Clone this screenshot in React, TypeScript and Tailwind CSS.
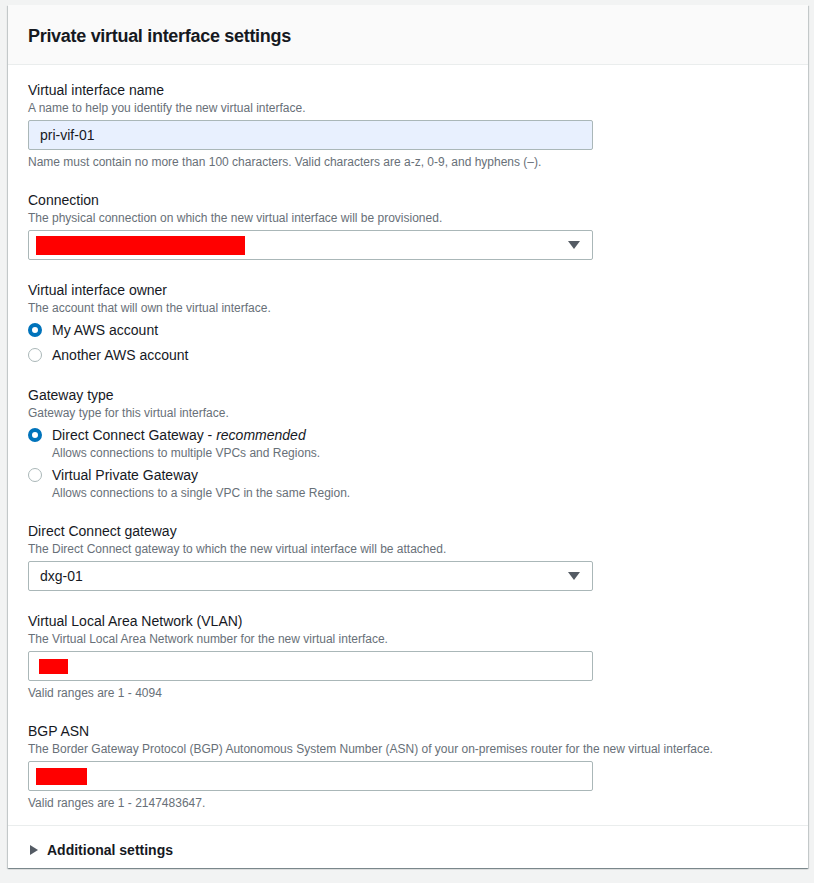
import React from "react";

const font = { fontFamily: '"Liberation Sans", Arial, sans-serif' };

function Label({ title, desc }: { title: string; desc: string }) {
  return (
    <div>
      <div className="text-[14px] leading-[20px] text-[#16191f]">{title}</div>
      <div className="text-[12px] leading-[16px] text-[#687078]">{desc}</div>
    </div>
  );
}

function Hint({ children }: { children: React.ReactNode }) {
  return <div className="mt-1 text-[12px] leading-[16px] text-[#687078]">{children}</div>;
}

function Redact({ w, h }: { w: number; h: number }) {
  return <div className="bg-[#ff0000]" style={{ width: w, height: h }} />;
}

function Select({ children }: { children: React.ReactNode }) {
  return (
    <div className="mt-1 flex h-[30px] w-[565px] items-center justify-between rounded-[2px] border border-[#aab7b8] bg-white pl-[7px] pr-[12px]">
      {children}
      <svg width="12" height="8" viewBox="0 0 12 8">
        <path d="M0 0h12L6 8z" fill="#545b64" />
      </svg>
    </div>
  );
}

function Input({ children, filled }: { children: React.ReactNode; filled?: boolean }) {
  return (
    <div
      className={
        "mt-1 flex h-[30px] w-[565px] items-center rounded-[2px] border border-[#aab7b8] pl-[7px] " +
        (filled ? "bg-[#e8f0fe]" : "bg-white")
      }
    >
      {children}
    </div>
  );
}

function Radio({
  checked,
  label,
  desc,
}: {
  checked?: boolean;
  label: React.ReactNode;
  desc?: string;
}) {
  return (
    <div className="flex gap-[10px]">
      <div className="flex h-[20px] items-center">
        {checked ? (
          <div className="h-[14px] w-[14px] rounded-full border-[4px] border-[#0073bb] bg-white" />
        ) : (
          <div className="h-[14px] w-[14px] rounded-full border border-[#aab7b8] bg-white" />
        )}
      </div>
      <div>
        <div className="text-[14px] leading-[20px] text-[#16191f]">{label}</div>
        {desc && <div className="text-[12px] leading-[16px] text-[#687078]">{desc}</div>}
      </div>
    </div>
  );
}

export default function App() {
  return (
    <div className="min-h-[883px] bg-[#f2f3f3] px-[8px] pt-[5px]" style={font}>
      <div className="w-[800px] bg-white shadow-[0_1px_1px_0_rgba(0,28,36,0.3),1px_1px_1px_0_rgba(0,28,36,0.15),-1px_1px_1px_0_rgba(0,28,36,0.15)]">
        <div className="flex h-[60px] items-center border-b border-[#eaeded] bg-[#fafafa] px-[20px] pt-[3px]">
          <h2 className="text-[18px] font-bold leading-[22px] tracking-[-0.3px] text-[#16191f]">
            Private virtual interface settings
          </h2>
        </div>

        <div className="flex flex-col gap-[20px] px-[20px] pb-[14px] pt-[15px]">
          <div>
            <Label
              title="Virtual interface name"
              desc="A name to help you identify the new virtual interface."
            />
            <Input filled>
              <span className="pl-[4px] text-[14px] text-[#16191f]">pri-vif-01</span>
            </Input>
            <Hint>
              Name must contain no more than 100 characters. Valid characters are a-z, 0-9, and
              hyphens (–).
            </Hint>
          </div>

          <div>
            <Label
              title="Connection"
              desc="The physical connection on which the new virtual interface will be provisioned."
            />
            <Select>
              <Redact w={209} h={19} />
            </Select>
          </div>

          <div>
            <Label
              title="Virtual interface owner"
              desc="The account that will own the virtual interface."
            />
            <div className="mt-1 flex flex-col gap-[5px]">
              <Radio checked label="My AWS account" />
              <Radio label="Another AWS account" />
            </div>
          </div>

          <div>
            <Label title="Gateway type" desc="Gateway type for this virtual interface." />
            <div className="mt-1 flex flex-col gap-[4px]">
              <Radio
                checked
                label={
                  <>
                    Direct Connect Gateway - <i>recommended</i>
                  </>
                }
                desc="Allows connections to multiple VPCs and Regions."
              />
              <Radio
                label="Virtual Private Gateway"
                desc="Allows connections to a single VPC in the same Region."
              />
            </div>
          </div>

          <div>
            <Label
              title="Direct Connect gateway"
              desc="The Direct Connect gateway to which the new virtual interface will be attached."
            />
            <Select>
              <span className="pl-[4px] text-[14px] text-[#16191f]">dxg-01</span>
            </Select>
          </div>

          <div>
            <Label
              title="Virtual Local Area Network (VLAN)"
              desc="The Virtual Local Area Network number for the new virtual interface."
            />
            <Input>
              <div className="pl-[3px]">
                <Redact w={29} h={15} />
              </div>
            </Input>
            <Hint>Valid ranges are 1 - 4094</Hint>
          </div>

          <div>
            <Label
              title="BGP ASN"
              desc="The Border Gateway Protocol (BGP) Autonomous System Number (ASN) of your on-premises router for the new virtual interface."
            />
            <Input>
              <Redact w={51} h={17} />
            </Input>
            <Hint>Valid ranges are 1 - 2147483647.</Hint>
          </div>
        </div>

        <div className="flex h-[43px] items-center gap-[9px] border-t border-[#eaeded] px-[22px] pt-[6px]">
          <svg width="8" height="10" viewBox="0 0 8 10">
            <path d="M0 0l8 5-8 5z" fill="#545b64" />
          </svg>
          <span className="text-[14px] font-bold text-[#16191f]">Additional settings</span>
        </div>
      </div>
    </div>
  );
}
